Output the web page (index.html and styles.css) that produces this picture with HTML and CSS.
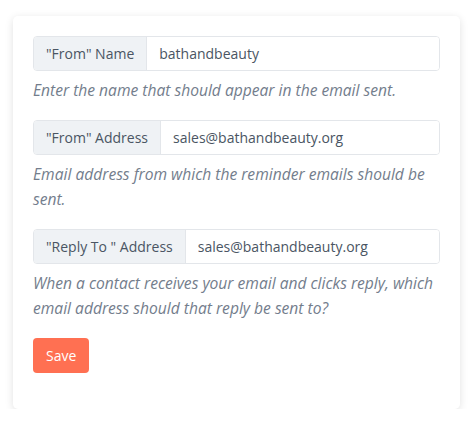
FILE: index.html
```html
<!DOCTYPE html>
<html>
<head>
<meta charset="utf-8">
<link rel="stylesheet" href="styles.css">
</head>
<body>
<div class="card">
  <div class="field">
    <div class="group">
      <span class="addon">"From" Name</span>
      <input class="control" type="text" value="bathandbeauty">
    </div>
    <p class="help">Enter the name that should appear in the email sent.</p>
  </div>
  <div class="field">
    <div class="group">
      <span class="addon">"From" Address</span>
      <input class="control" type="text" value="sales@bathandbeauty.org">
    </div>
    <p class="help">Email address from which the reminder emails should be sent.</p>
  </div>
  <div class="field">
    <div class="group">
      <span class="addon">"Reply To " Address</span>
      <input class="control" type="text" value="sales@bathandbeauty.org">
    </div>
    <p class="help">When a contact receives your email and clicks reply, which email address should that reply be sent to?</p>
  </div>
  <button class="btn">Save</button>
</div>
</body>
</html>
```
FILE: styles.css
```css
* { box-sizing: border-box; }
body {
  margin: 0;
  background: #fff;
  font-family: "Open Sans", sans-serif;
  font-size: 14px;
  color: #495057;
}
.card {
  margin: 16px 16px 0 13px;
  width: 447px;
  padding: 20px 20px 36px;
  background: #fff;
  border-radius: 5px;
  box-shadow: 0 2px 8px rgba(0,0,0,0.12);
}
.field { margin-bottom: 17px; }
.group {
  display: flex;
  height: 35px;
  border: 1px solid #e3e6ea;
  border-radius: 4px;
  overflow: hidden;
}
.addon {
  display: flex;
  align-items: center;
  padding: 0 12px;
  background: #eff2f5;
  border-right: 1px solid #e3e6ea;
  white-space: nowrap;
  color: #4a5563;
}
.control {
  flex: 1;
  min-width: 0;
  border: 0;
  outline: 0;
  padding: 0 12px;
  font: inherit;
  color: #4a5563;
  background: #fff;
}
.help {
  margin: 7px 0 0;
  font-size: 15.6px;
  font-style: italic;
  line-height: 25px;
  color: #737d8c;
}
.btn {
  display: block;
  height: 35px;
  padding: 0 13px;
  border: 0;
  border-radius: 4px;
  background: #ff7052;
  color: #fff;
  font: inherit;
}
```
